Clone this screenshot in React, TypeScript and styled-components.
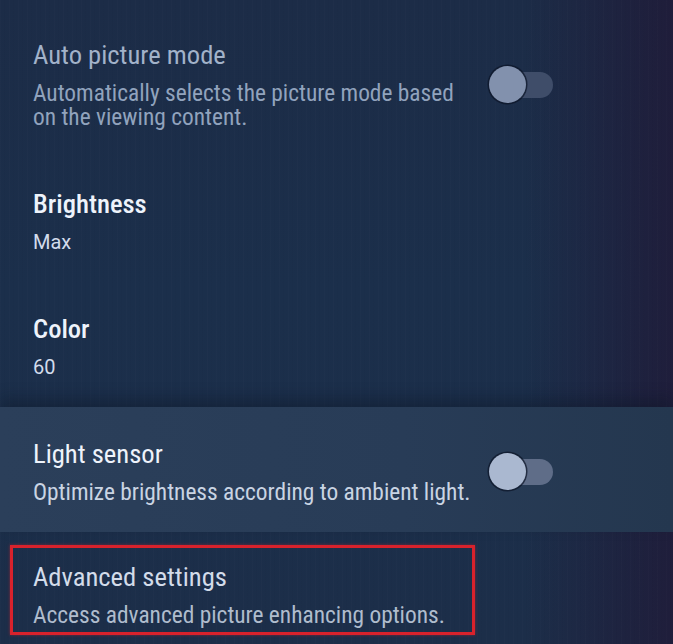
import React from 'react';
import styled, { createGlobalStyle } from 'styled-components';

const GlobalStyle = createGlobalStyle`
  html, body {
    margin: 0;
    padding: 0;
    background: #1b2e48;
  }

  body {
    font-family: Roboto, "Liberation Sans", sans-serif;
    -webkit-font-smoothing: antialiased;
  }
`;

const Screen = styled.div`
  width: 100%;
  height: 100vh;
  min-height: 644px;
  overflow: hidden;
  display: flex;
  flex-direction: column;
  padding-top: 8px;
  box-sizing: border-box;
  background:
    repeating-linear-gradient(
      90deg,
      rgba(255, 255, 255, 0.012) 0 1px,
      transparent 1px 4px,
      rgba(0, 0, 0, 0.02) 4px 5px,
      transparent 5px 9px
    ),
    linear-gradient(90deg, rgba(30, 22, 52, 0) 78%, rgba(32, 24, 54, 0.75) 100%),
    linear-gradient(180deg, #1c2c47 0%, #1b2f4b 45%, #1c2e49 100%);
`;

const Row = styled.div<{ $focused?: boolean; $tight?: boolean }>`
  display: flex;
  align-items: center;
  gap: 8px;
  padding: ${(p) => (p.$tight ? '13px 0 0 10px' : '32px 0 28px 33px')};
  background: ${(p) =>
    p.$focused
      ? 'linear-gradient(90deg, #2b3f5a 0%, #283c57 60%, #24374f 100%)'
      : 'transparent'};
  box-shadow: ${(p) => (p.$focused ? '0 -8px 14px rgba(8, 16, 32, 0.35)' : 'none')};
`;

const TextBlock = styled.div`
  width: 448px;
  display: flex;
  flex-direction: column;
  gap: 11px;
`;

const MarkedBox = styled.div`
  width: 465px;
  box-sizing: border-box;
  border: 3px solid #d8222c;
  padding: 14px 0 5px 20px;
  box-shadow: 0 0 3px rgba(216, 34, 44, 0.5);
`;

const Title = styled.div<{ $tone: 'dim' | 'bright' | 'soft'; $strong?: boolean }>`
  font-size: 26.6px;
  font-stretch: 87.5%;
  line-height: 30px;
  font-weight: ${(p) => (p.$strong ? 500 : 400)};
  color: ${(p) =>
    p.$tone === 'dim' ? '#a2b2c9' : p.$tone === 'bright' ? '#eef3fb' : '#d3dcea'};
  white-space: nowrap;
`;

const Description = styled.div<{ $tone: 'dim' | 'bright' | 'soft' }>`
  font-size: 23.4px;
  font-stretch: 87.5%;
  line-height: 24px;
  color: ${(p) =>
    p.$tone === 'dim' ? '#91a3bd' : p.$tone === 'bright' ? '#c9d4e3' : '#afbccd'};
`;

const Value = styled.div`
  font-size: 20px;
  line-height: 24px;
  color: #d2dcec;
`;

const Toggle = styled.div<{ $active?: boolean }>`
  position: relative;
  width: 64px;
  height: 38px;
  flex-shrink: 0;

  &::before {
    content: '';
    position: absolute;
    right: 0;
    top: 6px;
    width: 46px;
    height: 26px;
    border-radius: 13px;
    background: ${(p) => (p.$active ? '#5f6d88' : '#3f4d69')};
  }

  &::after {
    content: '';
    position: absolute;
    left: 0;
    top: 0;
    width: 37px;
    height: 37px;
    border-radius: 50%;
    background: ${(p) => (p.$active ? '#aab8d0' : '#8291ad')};
    box-shadow: 0 0 0 1.5px rgba(12, 20, 38, 0.7);
  }
`;

export default function App() {
  return (
    <>
      <GlobalStyle />
      <Screen>
        <Row>
          <TextBlock>
            <Title $tone="dim">Auto picture mode</Title>
            <Description $tone="dim">
              Automatically selects the picture mode based on the viewing content.
            </Description>
          </TextBlock>
          <Toggle />
        </Row>

        <Row>
          <TextBlock>
            <Title $tone="bright" $strong>Brightness</Title>
            <Value>Max</Value>
          </TextBlock>
        </Row>

        <Row>
          <TextBlock>
            <Title $tone="bright" $strong>Color</Title>
            <Value>60</Value>
          </TextBlock>
        </Row>

        <Row $focused>
          <TextBlock>
            <Title $tone="bright">Light sensor</Title>
            <Description $tone="bright">
              Optimize brightness according to ambient light.
            </Description>
          </TextBlock>
          <Toggle $active />
        </Row>

        <Row $tight>
          <MarkedBox>
            <TextBlock>
              <Title $tone="soft">Advanced settings</Title>
              <Description $tone="soft">Access advanced picture enhancing options.</Description>
            </TextBlock>
          </MarkedBox>
        </Row>
      </Screen>
    </>
  );
}
